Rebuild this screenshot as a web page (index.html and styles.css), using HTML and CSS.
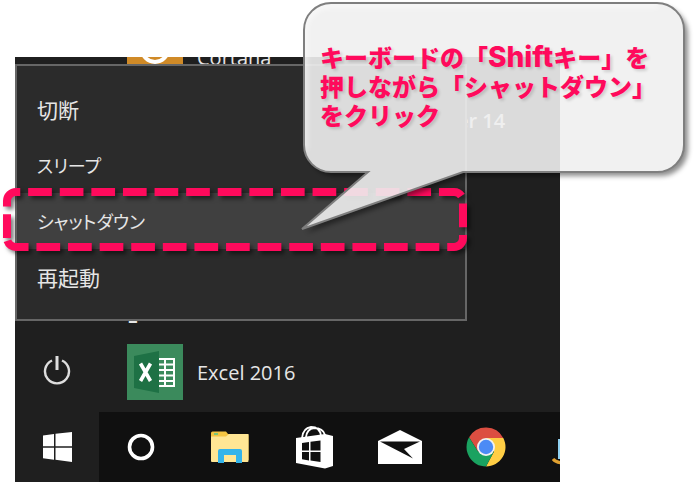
FILE: index.html
```
<!DOCTYPE html>
<html lang="ja">
<head>
    <meta charset="UTF-8">
    <meta name="viewport" content="width=device-width, initial-scale=1.0">
    <title>シャットダウン</title>
    <link rel="stylesheet" href="styles.css">
</head>
<body>

  <div class="desktop">
    <div class="start">
      <div class="rail">
        <button class="power" aria-label="電源">
          <svg width="28" height="30" viewBox="0 0 28 30" fill="none" stroke="#dedede" stroke-width="2.4">
            <path d="M9 5.5A12 12 0 1 0 19 5.5"/>
            <path d="M14 1v14" stroke-width="3"/>
          </svg>
        </button>
      </div>

      <ul class="apps">
        <li class="app first">
          <svg width="56" height="56" viewBox="0 0 56 56">
            <path fill="#d08a27" d="M0 0h56v56H0z"/>
            <circle cx="28" cy="20" r="13" fill="none" stroke="#fff" stroke-width="4"/>
          </svg>
          <span>Cortana</span>
        </li>
        <li class="letter">E</li>
        <li class="app">
          <svg width="56" height="56" viewBox="0 0 56 56">
            <path fill="#3b8a5c" d="M0 0h56v56H0z"/>
            <path fill="#1e7145" d="M7 12l25-5v42L7 44z"/>
            <path fill="none" stroke="#fff" stroke-width="2" d="M32 15h15v27H32M32 20.5h15M32 26h15M32 31.5h15M32 37h15M38 15v27"/>
            <path fill="none" stroke="#fff" stroke-width="3.6" d="M13.500 19.500l10 17.500M23.500 19.500l-10 17.500"/>
          </svg>
          <span>Excel 2016</span>
        </li>
      </ul>

      <div class="tiles">er 14</div>
    </div>

    <div class="taskbar">
      <button class="task win" aria-label="スタート">
        <svg width="30" height="30" viewBox="0 0 30 30" fill="#fff">
          <path d="M1 3.500l11-1.500v12.300H1zM13.500 1.800L30 0v14.300H13.500zM1 15.800h11v12L1 26.300zM13.500 15.800H30v14.200l-16.500-2.200z"/>
        </svg>
      </button>
      <button class="task" aria-label="検索">
        <svg width="30" height="30" viewBox="0 0 30 30">
          <circle cx="14" cy="15" r="11.500" fill="none" stroke="#fff" stroke-width="3.600"/>
        </svg>
      </button>
      <button class="task" aria-label="エクスプローラー">
        <svg width="44" height="34" viewBox="0 0 44 34">
          <path fill="#f5c542" d="M5 3q0-1.500 1.500-1.500H20l2 2.500h19q1.500 0 1.500 1.500V30H5z"/>
          <path fill="#ffe694" d="M5 6.500h15l3-2.500h19.500v27q0 1-1 1H6q-1 0-1-1z"/>
          <path fill="#7bc67a" d="M8 3h4v2H8z"/>
          <path fill="#34b4ea" d="M12 33V21q0-2 2-2h20q2 0 2 2v12h-6v-8H18v8z"/>
        </svg>
      </button>
      <button class="task" aria-label="ストア">
        <svg width="40" height="44" viewBox="0 0 40 44">
          <path fill="none" stroke="#fff" stroke-width="1.800" d="M8 13Q9 3 17 2q9 0 10 9M12 12q1-8 8-9 9 0 11 7"/>
          <path fill="#fff" d="M2 13l29-4 8 2v30l-8 2.500L2 38z"/>
          <path fill="#101010" d="M8 18l7-1v8.500H8zM16.500 16.800l10-1.300v10h-10zM8 27h7v8.500l-7-1.200zM16.500 27h10v10l-10-1.400z"/>
        </svg>
      </button>
      <button class="task" aria-label="メール">
        <svg width="44" height="36" viewBox="0 0 44 36">
          <path fill="#fff" d="M0 12L22 1l22 11v23H0z"/>
          <path fill="#101010" d="M2 12.500h40L26 20l9 9.500z"/>
        </svg>
      </button>
      <button class="task" aria-label="Chrome">
        <svg width="40" height="40" viewBox="-20 -20 40 40">
          <path fill="#dc4e41" d="M-16.900-9.700A19.500 19.500 0 0 1 17.300-9H0L-8 4.500z"/>
          <path fill="#ffce44" d="M17.300-9A19.500 19.500 0 0 1 0 19.500L8 4.500 0-9z"/>
          <path fill="#1aa260" d="M-16.900-9.700A19.500 19.500 0 0 0 0 19.500L8 4.500H-8z"/>
          <circle r="9" fill="#f1f1f1"/>
          <circle r="7.200" fill="#4c8bf5"/>
        </svg>
      </button>
      <button class="task" aria-label="アプリ">
        <svg width="40" height="44" viewBox="0 0 40 44">
          <path fill="#8fd0f0" d="M6 14h24v20H6z"/>
          <path fill="none" stroke="#e0a030" stroke-width="3" d="M1 34q3 4 12 4"/>
        </svg>
      </button>
    </div>

    <div class="menu">
      <button>切断</button>
      <button class="kana">スリープ</button>
      <button class="kana active">シャットダウン
        <svg class="mark" width="480" height="80" viewBox="-4 -4 480 80">
          <path d="M4 50V13a9 9 0 0 1 9-9H451a9 9 0 0 1 9 9V50a9 9 0 0 1-9 9H13a9 9 0 0 1-9-9"/>
        </svg>
      </button>
      <button>再起動</button>
    </div>
  </div>

  <div class="callout">
    <svg class="bubble" width="396" height="245" viewBox="0 0 396 245">
      <defs>
        <filter id="outside" x="-5%" y="-5%" width="115%" height="115%">
          <feGaussianBlur in="SourceAlpha" stdDeviation="2.500"/>
          <feOffset dx="4" dy="4" result="b"/>
          <feFlood flood-color="#000" flood-opacity=".45"/>
          <feComposite in2="b" operator="in"/>
          <feComposite in2="SourceAlpha" operator="out"/>
        </filter>
        <path id="shape" d="M33 3H359a27 27 0 0 1 27 27V145a27 27 0 0 1-27 27H165L4 229 70 172H33a27 27 0 0 1-27-27V30a27 27 0 0 1 27-27z"/>
        <clipPath id="inner"><use href="#shape"/></clipPath>
        <filter id="soft"><feGaussianBlur stdDeviation="3"/></filter>
      </defs>
      <use href="#shape" fill="#000" filter="url(#outside)"/>
      <use href="#shape" fill="#f0f0f0" fill-opacity=".9"/>
      <g clip-path="url(#inner)">
        <path d="M6 150V31a26 26 0 0 1 26-26H360" fill="none" stroke="#fff" stroke-width="5" opacity=".7" filter="url(#soft)"/>
      </g>
      <use href="#shape" fill="none" stroke="#7f7f7f" stroke-width="2"/>
    </svg>
    <p>キーボードの「<span class="latin">Shift</span>キー」を<br>押しながら「シャットダウン」<br>をクリック</p>
  </div>

</body>
</html>
```
FILE: styles.css
```
* {
  box-sizing: border-box;
}

body {
  position: relative;
  margin: 0;
  padding: 57px 134px 5px 15px;
  background-color: #fff;
  font-family: "Open Sans", "Noto Sans CJK JP", sans-serif;
  font-size: 20px;
  color: #e6e6e6;
}

button {
  padding: 0;
  border: 0;
  background: none;
  color: inherit;
  font: inherit;
  cursor: pointer;
}

svg {
  display: block;
  flex-shrink: 0;
}

.desktop {
  position: relative;
  background-color: #1f1f1f;
}

.start {
  display: flex;
  height: 355px;
  overflow: hidden;
}

.rail {
  display: flex;
  flex-direction: column;
  justify-content: flex-end;
  width: 84px;
}

.power {
  display: flex;
  align-items: center;
  justify-content: center;
  height: 84px;
}

.apps {
  display: flex;
  flex-direction: column;
  flex: 1;
  margin: 0;
  padding: 0 0 12px 28px;
  list-style: none;
}

.app {
  display: flex;
  align-items: center;
  gap: 14px;
}

.first {
  margin-top: -28px;
}

.letter {
  margin-top: auto;
  height: 42px;
  line-height: 28px;
  font-weight: 600;
}

.tiles {
  width: 103px;
  padding-top: 50px;
  line-height: 28px;
  font-weight: 600;
}

.taskbar {
  display: flex;
  height: 70px;
  overflow: hidden;
  background-color: #101010;
}

.task {
  display: flex;
  flex: 0 0 86px;
  align-items: center;
  justify-content: center;
}

.win {
  flex-basis: 84px;
  background-color: #1f1f1f;
}

/* power menu opens over the app list */
.menu {
  position: absolute;
  top: 7px;
  left: 0;
  width: 83%;
  padding: 15px 0 14px;
  border: 2px solid #666;
  background-color: #2b2b2b;
}

.menu button {
  position: relative;
  display: block;
  width: 100%;
  height: 56px;
  padding-left: 20px;
  text-align: left;
  font-family: "Noto Sans CJK JP", sans-serif;
  font-size: 21px;
}

.menu .kana {
  font-size: 18px;
  font-feature-settings: "palt";
}

.menu .active {
  background-color: #404040;
}

.mark {
  position: absolute;
  top: -9px;
  left: -18px;
  fill: none;
  stroke: #ff0a5c;
  stroke-width: 8;
  stroke-dasharray: 23.7 7.9;
  filter: drop-shadow(3px 3px 2px rgba(0, 0, 0, .5));
}

.callout {
  position: absolute;
  top: 0;
  left: 298px;
}

.bubble {
  position: absolute;
  top: 0;
  left: 0;
}

.callout p {
  position: relative;
  margin: 0;
  padding: 42px 0 0 22px;
  white-space: nowrap;
  font-family: "Noto Sans CJK JP", sans-serif;
  font-size: 24px;
  font-weight: 900;
  line-height: 29px;
  color: #ff0a5c;
  text-shadow: 2px 2px 3px rgba(0, 0, 0, .15);
}

.callout .latin {
  font-family: Inter, sans-serif;
  font-size: 28px;
  font-weight: 800;
  line-height: 1;
}
```
